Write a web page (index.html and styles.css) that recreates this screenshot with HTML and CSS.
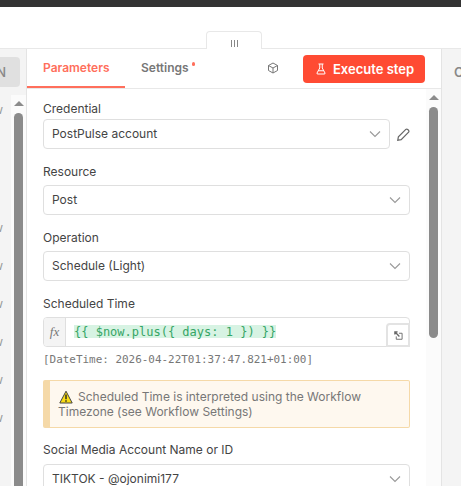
FILE: index.html
```html
<!DOCTYPE html>
<html lang="en">
<head>
<meta charset="utf-8">
<title>PostPulse</title>
<link rel="stylesheet" href="styles.css">
</head>
<body>
<div class="topbar"></div>
<header class="header">
  <div class="handle"><i></i><i></i><i></i></div>
</header>
<div class="columns">
  <aside class="input-panel">
    <div class="input-tab">N</div>
    <div class="input-body">
      <div class="cut-list">
        <span class="first">w</span><span>w</span><span>w</span><span>w</span><span>w</span><span>w</span><span>w</span>
      </div>
      <div class="scrollbar long"><div class="arrow"></div><div class="thumb"></div></div>
    </div>
  </aside>
  <main class="panel">
    <nav class="tabs">
      <div class="tab active">Parameters</div>
      <div class="tab settings">Settings<span class="dot"></span></div>
      <svg class="cube" viewBox="0 0 24 24"><path d="M12 2 21 7v10l-9 5-9-5V7zM3 7l9 5 9-5M12 12v10"/></svg>
      <button class="execute"><svg viewBox="0 0 24 24"><path d="M7 2h10M9.500 2v8L4 20q-1 2 2 2h12q3 0 2-2L14.500 10V2M6.500 15.500h11"/></svg><span>Execute step</span></button>
    </nav>
    <div class="body">
      <div class="form">
        <label class="label credential">Credential</label>
        <div class="row">
          <div class="select">PostPulse account<svg class="chev" viewBox="0 0 12 8"><path d="m1 1.500 5 5 5-5"/></svg></div>
          <svg class="pencil" viewBox="0 0 14 14"><path d="m.8 13.200.7-3.700 8-8c1.200-1.200 4.200 1.200 3 3l-8 8z"/></svg>
        </div>
        <label class="label">Resource</label>
        <div class="select">Post<svg class="chev" viewBox="0 0 12 8"><path d="m1 1.500 5 5 5-5"/></svg></div>
        <label class="label">Operation</label>
        <div class="select">Schedule (Light)<svg class="chev" viewBox="0 0 12 8"><path d="m1 1.500 5 5 5-5"/></svg></div>
        <label class="label">Scheduled Time</label>
        <div class="expression">
          <div class="fx">fx</div>
          <code>{{ $now.plus({ days: 1 }) }}</code>
          <div class="expand"><svg viewBox="0 0 10 10"><path d="M5.500 2.500H9v6.700H2.500V6"/><path class="head" d="M1.200 1.200 6 6M1 4V1h3"/></svg></div>
        </div>
        <div class="result">[DateTime: 2026-04-22T01:37:47.821+01:00]</div>
        <div class="notice">
          <svg class="warn" viewBox="0 0 14 14"><path class="tri" d="M7 1.200 13.200 13H.8z"/><path class="mark" d="M7 4.500v4.700M7 10.300v1.500"/></svg>Scheduled Time is interpreted using the Workflow<br>Timezone (see Workflow Settings)
        </div>
        <label class="label social">Social Media Account Name or ID</label>
        <div class="select">TIKTOK - @ojonimi177<svg class="chev" viewBox="0 0 12 8"><path d="m1 1.500 5 5 5-5"/></svg></div>
      </div>
      <div class="scrollbar"><div class="arrow"></div><div class="thumb"></div></div>
    </div>
  </main>
  <aside class="output-panel">O</aside>
</div>
</body>
</html>
```
FILE: styles.css
```css
* { box-sizing: border-box; }
body {
  margin: 0;
  width: 461px;
  height: 486px;
  overflow: hidden;
  background: #fff;
  color: #444;
  font: 12px/16px Inter, sans-serif;
}
svg { fill: none; stroke: currentColor; flex: none; }
.topbar { height: 7px; background: #333; }
.header {
  height: 42px;
  border-bottom: 1px solid #e8e8e8;
  padding: 24px 0 0 206px;
}
.handle {
  display: flex;
  justify-content: center;
  gap: 2px;
  width: 56px;
  height: 18px;
  padding: 8px 0 0;
  border: 1px solid #e8e8e8;
  border-bottom: 0;
  border-radius: 4px 4px 0 0;
  background: #fff;
}
.handle i { width: 1px; height: 7px; background: #888; }
.columns { display: flex; height: 437px; }
.input-panel {
  width: 27px;
  padding-top: 8px;
  border-right: 1px solid #e4e4e4;
  background: #f4f4f4;
  overflow: hidden;
}
.input-tab {
  width: 20px;
  height: 30px;
  border-radius: 0 4px 4px 0;
  background: #e0e0e0;
  color: #888;
  font-size: 13px;
  font-weight: 500;
  line-height: 30px;
  display: flex;
  justify-content: flex-end;
  padding-right: 14px;
}
.input-body { display: flex; justify-content: space-between; height: 391px; margin-top: 8px; }
.cut-list {
  width: 3px;
  display: flex;
  flex-direction: column;
  align-items: flex-end;
  padding-top: 7px;
  color: #999;
}
.cut-list span { height: 38px; flex: none; }
.cut-list .first { height: 118px; }
.scrollbar {
  display: flex;
  flex-direction: column;
  align-items: center;
  width: 15px;
  flex: none;
  padding-top: 6px;
  background: #fbfbfb;
}
.arrow {
  border: solid transparent;
  border-width: 0 5px 5px;
  border-bottom-color: #8b8b8b;
}
.thumb { width: 9px; height: 231px; margin-top: 7px; border-radius: 5px; background: #8b8b8b; }
.long .thumb { height: 400px; flex: none; }
.panel { width: 414px; }
.tabs {
  display: flex;
  height: 40px;
  border-bottom: 1px solid #e8e8e8;
  font-weight: 600;
  color: #777;
}
.tab { line-height: 38px; height: 39px; padding: 0 16px; }
.active { width: 98px; border-bottom: 2px solid #ff6f5c; color: #ff6f5c; }
.settings { display: flex; width: 142px; }
.dot { width: 3px; height: 4px; margin: 13px 0 0 3px; border-radius: 2px; background: #ff6f5c; }
.cube { width: 12px; height: 12px; margin: 13px 24px 0 0; stroke-width: 2; }
.execute {
  display: flex;
  align-items: center;
  width: 122px;
  height: 28px;
  margin-top: 6px;
  padding: 0 0 0 12px;
  gap: 6px;
  border: 0;
  border-radius: 4px;
  background: #ff4b33;
  color: #fff;
  font: 600 13px/28px Inter, sans-serif;
  white-space: nowrap;
}
.execute svg { width: 12px; height: 12px; stroke-width: 2; }
.body { display: flex; height: 397px; overflow: hidden; }
.form { width: 399px; padding: 12px 16px 0; }
.label { display: block; height: 36px; padding-top: 15px; }
.credential { height: 18px; padding-top: 0; }
.row { display: flex; align-items: center; gap: 7px; }
.row .select { width: 347px; }
.pencil { width: 13px; height: 13px; color: #666; stroke-width: 1.300; }
.select {
  display: flex;
  align-items: center;
  justify-content: space-between;
  height: 30px;
  padding: 0 8px;
  border: 1px solid #dfdfdf;
  border-radius: 4px;
}
.chev { width: 12px; height: 8px; color: #999; stroke-width: 1.100; }
.expression {
  display: flex;
  height: 30px;
  border: 1px solid #dfdfdf;
  border-radius: 4px 4px 0 4px;
}
.fx {
  width: 22px;
  border-right: 1px solid #dfdfdf;
  border-radius: 3px 0 0 3px;
  background: #f4f4f4;
  color: #777;
  font: italic 13px/27px "Liberation Serif", serif;
  text-align: center;
}
.expression code {
  height: 13px;
  margin: 7px auto 0 8px;
  background: #d7f3e3;
  color: #35a565;
  font: 12px/15px "DejaVu Sans Mono", monospace;
  white-space: pre;
}
.expand {
  display: flex;
  align-items: center;
  justify-content: center;
  width: 24px;
  height: 24px;
  margin: 5px -1px 0 0;
  border: 2px solid #e3e3e3;
  border-radius: 4px 0 0 0;
  color: #666;
}
.expand svg { width: 9px; height: 9px; }
.expand .head { stroke-width: 1.500; }
.result {
  margin-top: 4px;
  color: #777;
  font: 10.950px/17px "DejaVu Sans Mono", monospace;
  height: 16px;
  white-space: nowrap;
}
.notice {
  height: 48px;
  margin-top: 13px;
  padding: 8px 0 0 8px;
  border: 1px solid #f5d9a8;
  border-left-width: 7px;
  border-radius: 2px;
  background: #fef8ef;
  color: #777;
  line-height: 15px;
  white-space: nowrap;
}
.warn { width: 14px; height: 14px; margin: 0 5px 0 1px; vertical-align: -3px; }
.tri { fill: #f9dc16; stroke: #444; }
.mark { stroke: #222; stroke-width: 1.400; }
.social { padding-top: 14px; }
.output-panel {
  width: 20px;
  padding: 15px 0 0 12px;
  border-left: 1px solid #e4e4e4;
  background: #f4f4f4;
  color: #888;
  font-size: 13px;
  font-weight: 600;
  overflow: hidden;
}
```
